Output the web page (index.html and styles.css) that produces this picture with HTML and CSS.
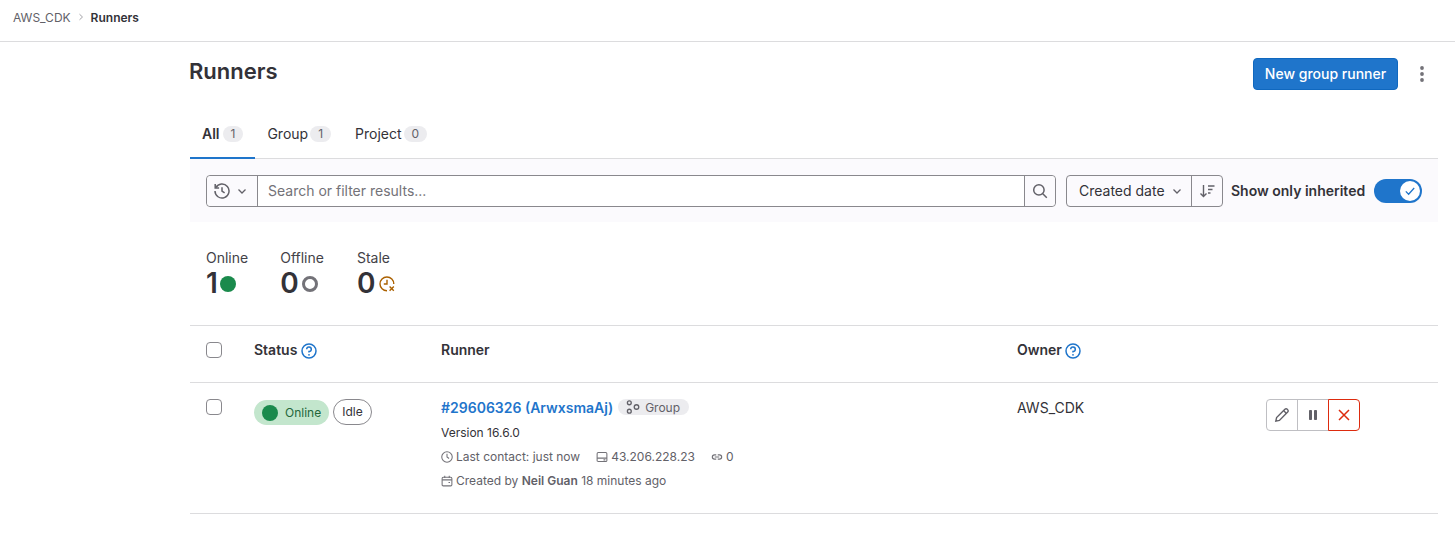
FILE: index.html
```html
<!DOCTYPE html>
<html lang="en">
<head>
<meta charset="utf-8">
<title>Runners</title>
<link rel="stylesheet" href="styles.css">
</head>
<body>
<nav class="topbar">
  <span class="crumb">AWS_CDK</span>
  <svg class="crumb-sep" viewBox="0 0 8 8" width="8" height="8"><path d="M2.5 1.2 5.5 4 2.5 6.8" fill="none" stroke="#a4a3a8" stroke-width="1"/></svg>
  <span class="crumb-current">Runners</span>
</nav>
<main class="page">
  <header class="page-head">
    <h1 class="title">Runners</h1>
    <div class="head-actions">
      <button class="btn-primary">New group runner</button>
      <svg class="kebab" viewBox="0 0 16 16" width="16" height="16"><circle cx="8" cy="2" r="1.9"/><circle cx="8" cy="8" r="1.9"/><circle cx="8" cy="14" r="1.9"/></svg>
    </div>
  </header>

  <div class="tabs">
    <div class="tab active">All<span class="count">1</span></div>
    <div class="tab">Group<span class="count">1</span></div>
    <div class="tab">Project<span class="count">0</span></div>
  </div>

  <div class="filterbar">
    <div class="search">
      <div class="history">
        <svg viewBox="0 0 16 16" width="16" height="16" fill="none" stroke="#626168" stroke-width="1.5"><path d="M1.9 4.6A7 7 0 1 1 1 8"/><path d="M1.2 1v3.9h3.9"/><path d="M8 4.2V8l2.6 1.8"/></svg>
        <svg viewBox="0 0 12 12" width="12" height="12" fill="none" stroke="#626168" stroke-width="1.3"><path d="M2.5 4.5 6 8l3.5-3.5"/></svg>
      </div>
      <div class="search-input">Search or filter results...</div>
      <div class="search-btn">
        <svg viewBox="0 0 16 16" width="16" height="16" fill="none" stroke="#626168" stroke-width="1.5"><circle cx="6.9" cy="6.9" r="5.2"/><path d="m10.8 10.8 4 4"/></svg>
      </div>
    </div>
    <div class="sort">
      <div class="sort-field">Created date
        <svg viewBox="0 0 12 12" width="12" height="12" fill="none" stroke="#626168" stroke-width="1.3"><path d="M2.5 4.5 6 8l3.5-3.5"/></svg>
      </div>
      <div class="sort-dir">
        <svg viewBox="0 0 16 16" width="16" height="16" fill="none" stroke="#626168" stroke-width="1.4"><path d="M4.5 2v11.5M1.5 10.5l3 3 3-3"/><path d="M9 3h6.5M9 6.5h4.5M9 10h2.5"/></svg>
      </div>
    </div>
    <span class="toggle-label">Show only inherited</span>
    <div class="toggle">
      <div class="knob">
        <svg viewBox="0 0 12 12" width="12" height="12" fill="none" stroke="#1f75cb" stroke-width="1.3"><path d="M1.8 6.4 4.6 9.2 10.2 3"/></svg>
      </div>
    </div>
  </div>

  <div class="stats">
    <div class="stat">
      <div class="stat-label">Online</div>
      <div class="stat-value">1<span class="dot-online"></span></div>
    </div>
    <div class="stat">
      <div class="stat-label">Offline</div>
      <div class="stat-value">0<span class="dot-offline"></span></div>
    </div>
    <div class="stat">
      <div class="stat-label">Stale</div>
      <div class="stat-value">0
        <svg class="stale-icon" viewBox="0 0 16 16" width="16" height="16" fill="none" stroke="#ab6100" stroke-width="1.4"><path d="M8 14.8A6.9 6.9 0 1 1 14.8 8"/><path d="M8 3.8V8H4.8"/><path d="m10.6 10.6 4.2 4.2M14.8 10.6l-4.2 4.2"/></svg>
      </div>
    </div>
  </div>

  <section class="table">
    <div class="row head-row">
      <div class="cell"><span class="checkbox"></span></div>
      <div class="cell th">Status
        <svg class="help" viewBox="0 0 16 16" width="16" height="16" fill="none" stroke="#1f75cb" stroke-width="1.5"><circle cx="8" cy="8" r="7"/><path d="M5.7 6.2A2.3 2.3 0 1 1 8 8.6v1"/><circle cx="8" cy="11.8" r=".9" fill="#1f75cb" stroke="none"/></svg>
      </div>
      <div class="cell th">Runner</div>
      <div class="cell th">Owner
        <svg class="help" viewBox="0 0 16 16" width="16" height="16" fill="none" stroke="#1f75cb" stroke-width="1.5"><circle cx="8" cy="8" r="7"/><path d="M5.7 6.2A2.3 2.3 0 1 1 8 8.6v1"/><circle cx="8" cy="11.8" r=".9" fill="#1f75cb" stroke="none"/></svg>
      </div>
      <div class="cell"></div>
    </div>
    <div class="row body-row">
      <div class="cell"><span class="checkbox"></span></div>
      <div class="cell badges">
        <span class="badge-online"><span class="badge-dot"></span>Online</span>
        <span class="badge-idle">Idle</span>
      </div>
      <div class="cell runner">
        <div class="runner-title">
          <a class="runner-link">#29606326 (ArwxsmaAj)</a>
          <span class="badge-group">
            <svg viewBox="0 0 16 16" width="14" height="14" fill="none" stroke="#626168" stroke-width="1.5"><circle cx="3.8" cy="3.2" r="2.2"/><circle cx="3.8" cy="12.8" r="2.2"/><circle cx="12" cy="8" r="2.6"/></svg>
            Group
          </span>
        </div>
        <div class="version">Version 16.6.0</div>
        <div class="meta">
          <span class="meta-item">
            <svg viewBox="0 0 16 16" width="12" height="12" fill="none" stroke="#737278" stroke-width="1.4"><circle cx="8" cy="8" r="7"/><path d="M8 3.8V8l2.8 2"/></svg>
            Last contact: just now
          </span>
          <span class="meta-item">
            <svg viewBox="0 0 16 16" width="12" height="12" fill="none" stroke="#737278" stroke-width="1.4"><rect x="1.5" y="2" width="13" height="12" rx="1.5"/><path d="M1.5 9.5h13M10 11.8h2.5"/></svg>
            43.206.228.23
          </span>
          <span class="meta-item">
            <svg viewBox="0 0 16 16" width="12" height="12" fill="none" stroke="#737278" stroke-width="1.6"><path d="M7 5.2H4.6a2.8 2.8 0 0 0 0 5.6H7M9 5.2h2.4a2.8 2.8 0 0 1 0 5.6H9M5 8h6"/></svg>
            0
          </span>
        </div>
        <div class="meta">
          <span class="meta-item">
            <svg viewBox="0 0 16 16" width="12" height="12" fill="none" stroke="#737278" stroke-width="1.4"><rect x="1.5" y="3" width="13" height="11.5" rx="1.5"/><path d="M1.5 6.5h13M5 1v3M11 1v3M10 10h2"/></svg>
            <span>Created by <b class="author">Neil Guan</b> 18 minutes ago</span>
          </span>
        </div>
      </div>
      <div class="cell owner">AWS_CDK</div>
      <div class="cell actions">
        <div class="btn-group">
          <button class="icon-btn">
            <svg viewBox="0 0 16 16" width="16" height="16" fill="none" stroke="#626168" stroke-width="1.4"><path d="M1.8 14.2l.8-3.6 8.3-8.3a1.7 1.7 0 0 1 2.4 0l.4.4a1.7 1.7 0 0 1 0 2.4l-8.3 8.3z"/><path d="m9.6 3.6 2.8 2.8"/></svg>
          </button>
          <button class="icon-btn">
            <svg viewBox="0 0 16 16" width="16" height="16" fill="#626168"><rect x="4" y="3" width="3" height="10" rx=".8"/><rect x="9" y="3" width="3" height="10" rx=".8"/></svg>
          </button>
          <button class="icon-btn danger">
            <svg viewBox="0 0 16 16" width="16" height="16" fill="none" stroke="#dd2b0e" stroke-width="1.5"><path d="m3 3 10 10M13 3 3 13"/></svg>
          </button>
        </div>
      </div>
    </div>
  </section>
</main>
</body>
</html>
```

FILE: styles.css
```css
* { box-sizing: border-box; }
html, body { margin: 0; padding: 0; background: #fff; }
body {
  font-family: Inter, "Noto Sans", sans-serif;
  font-size: 14px;
  color: #333238;
  overflow: hidden;
}
button { font-family: inherit; }

.topbar {
  height: 42px;
  padding: 0 13px 7px;
  display: flex;
  align-items: center;
  gap: 5px;
  font-size: 12px;
  border-bottom: 1px solid #dcdcde;
}
.crumb { color: #626168; }
.crumb-sep { margin: 0 1px; }
.crumb-current { font-weight: 600; color: #333238; }

.page { margin-left: 190px; width: 1248px; }

.page-head {
  display: flex;
  justify-content: space-between;
  height: 74px;
  padding-top: 16px;
}
.title {
  margin: 0 0 0 -1px;
  font-size: 22px;
  line-height: 27px;
  font-weight: 600;
  color: #333238;
}
.head-actions { display: flex; align-items: flex-start; margin-right: 8px; gap: 16px; }
.btn-primary {
  width: 145px;
  height: 32px;
  border: 1px solid #1068bf;
  border-radius: 4px;
  background: #1f75cb;
  color: #fff;
  font-size: 14px;
  font-weight: 500;
  padding: 0 0 2px;
}
.kebab { fill: #737278; margin-top: 8px; }

.tabs {
  display: flex;
  height: 43px;
  border-bottom: 1px solid #dcdcde;
}
.tab {
  display: flex;
  align-items: center;
  height: 42px;
  padding: 0 12px 7px;
  gap: 2px;
  color: #333238;
}
.tab.active {
  font-weight: 600;
  box-shadow: inset 0 -2px 0 #1f75cb;
  height: 43px;
  margin-bottom: -1px;
  padding-bottom: 8px;
  gap: 3px;
}
.count {
  background: #ececef;
  color: #626168;
  font-size: 12px;
  font-weight: 400;
  line-height: 16px;
  border-radius: 8px;
  padding: 0 8px;
  text-align: center;
  margin-top: 1px;
}

.filterbar {
  display: flex;
  align-items: center;
  height: 63px;
  padding: 0 16px;
  background: #fbfafd;
}
.search {
  display: flex;
  flex: none;
  width: 850px;
  height: 32px;
  border: 1px solid #89888d;
  border-radius: 4px;
  background: #fff;
}
.history {
  width: 51px;
  display: flex;
  align-items: center;
  padding-left: 7px;
  gap: 6px;
  border-right: 1px solid #89888d;
  background: #fbfafd;
  border-radius: 4px 0 0 4px;
}
.search-input {
  flex: 1;
  padding-left: 10px;
  line-height: 30px;
  color: #737278;
}
.search-btn {
  width: 31px;
  display: flex;
  align-items: center;
  justify-content: center;
  border-left: 1px solid #89888d;
  background: #fbfafd;
  border-radius: 0 4px 4px 0;
}
.sort {
  display: flex;
  flex: none;
  height: 32px;
  margin-left: 10px;
  border: 1px solid #89888d;
  border-radius: 4px;
  background: #fbfafd;
}
.sort-field {
  width: 124px;
  display: flex;
  align-items: center;
  justify-content: space-between;
  padding: 0 8px 0 12px;
  color: #333238;
}
.sort-dir {
  width: 31px;
  display: flex;
  align-items: center;
  justify-content: center;
  border-left: 1px solid #89888d;
}
.toggle-label { margin-left: 8px; font-weight: 600; color: #333238; white-space: nowrap; }
.toggle {
  flex: none;
  width: 48px;
  height: 24px;
  margin-left: auto;
  border-radius: 12px;
  background: #1f75cb;
  display: flex;
  align-items: center;
  justify-content: flex-end;
  padding-right: 2px;
}
.knob {
  width: 20px;
  height: 20px;
  border-radius: 50%;
  background: #fff;
  display: flex;
  align-items: center;
  justify-content: center;
}

.stats {
  display: flex;
  gap: 32px;
  height: 103px;
  padding: 27px 16px 0;
}
.stat:last-child { margin-left: 1px; }
.stat-label { line-height: 17px; color: #434248; }
.stat-value {
  display: flex;
  align-items: center;
  gap: 3px;
  font-size: 28px;
  line-height: 34px;
  font-weight: 600;
  color: #333238;
}
.dot-online { width: 16px; height: 16px; border-radius: 50%; background: #1a8a4c; margin: 2px 0 0 -1px; }
.dot-offline { width: 16px; height: 16px; border-radius: 50%; border: 3px solid #737278; margin-top: 2px; }
.stale-icon { margin: 2px 0 0 1px; }

.table { border-top: 1px solid #dcdcde; }
.row {
  display: grid;
  grid-template-columns: 64px 187px 576px 248px 1fr;
  border-bottom: 1px solid #dcdcde;
}
.head-row { height: 57px; align-items: center; padding-bottom: 8px; }
.body-row { height: 131px; }
.cell { padding-left: 16px; }
.row .cell + .cell { padding-left: 0; }
.th { display: flex; align-items: center; gap: 3.5px; font-weight: 600; padding-bottom: 2px; }
.help { margin-top: 4px; }
.checkbox {
  display: block;
  width: 16px;
  height: 16px;
  border: 1px solid #89888d;
  border-radius: 4px;
  background: #fff;
}
.body-row .cell { padding-top: 16px; }

.badges { display: flex; align-items: flex-start; gap: 4px; }
.body-row .badges { padding-top: 17px; }
.badge-online {
  display: flex;
  align-items: center;
  width: 75px;
  height: 25px;
  padding-left: 8px;
  gap: 7px;
  border-radius: 13px;
  background: #c3e6cd;
  color: #24663b;
  font-size: 12px;
}
.badge-dot { width: 16px; height: 16px; border-radius: 50%; background: #1a8a4c; }
.badge-idle {
  width: 39px;
  height: 26px;
  margin-top: -1px;
  border: 1px solid #89888d;
  border-radius: 13px;
  font-size: 12px;
  line-height: 24px;
  text-align: center;
  color: #333238;
}

.body-row .runner { padding-top: 15px; }
.runner-title { display: flex; align-items: center; gap: 5px; height: 18px; }
.runner-link { color: #1f75cb; font-weight: 600; font-size: 14px; }
.badge-group {
  display: flex;
  align-items: center;
  gap: 5px;
  height: 16px;
  padding: 0 9px 0 8px;
  border-radius: 8px;
  background: #ececef;
  color: #626168;
  font-size: 12px;
}
.version { margin-top: 9px; font-size: 12px; line-height: 16px; color: #333238; }
.meta {
  display: flex;
  gap: 16px;
  margin-top: 8px;
  font-size: 12px;
  line-height: 16px;
  color: #626168;
}
.meta-item { display: flex; align-items: center; gap: 3px; }
.author { font-weight: 600; }
.owner { font-size: 14px; }

.btn-group { display: flex; margin-left: 1px; }
.icon-btn {
  width: 32px;
  height: 32px;
  padding: 0;
  display: flex;
  align-items: center;
  justify-content: center;
  background: #fff;
  border: 1px solid #bfbfc3;
  margin-left: -1px;
}
.icon-btn:first-child { border-radius: 4px 0 0 4px; margin-left: 0; }
.icon-btn.danger { border-color: #dd2b0e; border-radius: 0 4px 4px 0; }
```
